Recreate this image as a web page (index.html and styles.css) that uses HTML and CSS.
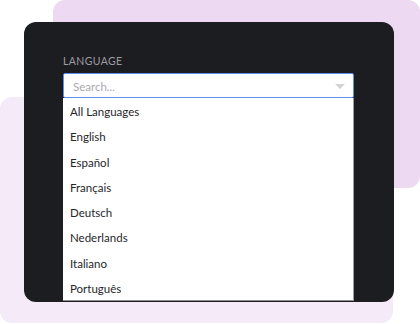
FILE: index.html
```html
<!DOCTYPE html>
<html>
<head>
<meta charset="utf-8">
<link rel="stylesheet" href="styles.css">
</head>
<body>
<div class="stage">
  <div class="blob blob-top"></div>
  <div class="blob blob-bottom"></div>
  <div class="card">
    <div class="label">LANGUAGE</div>
    <div class="select">
      <div class="search">
        <span class="placeholder">Search...</span>
        <span class="caret"></span>
      </div>
      <ul class="list">
        <li>All Languages</li>
        <li>English</li>
        <li>Español</li>
        <li>Français</li>
        <li>Deutsch</li>
        <li>Nederlands</li>
        <li>Italiano</li>
        <li>Português</li>
      </ul>
    </div>
  </div>
</div>
</body>
</html>
```

FILE: styles.css
```css
* { box-sizing: border-box; }
html, body { margin: 0; padding: 0; background: #ffffff; }
body { font-family: "Lato", "Inter", sans-serif; }

.stage {
  position: relative;
  width: 420px;
  height: 324px;
  overflow: hidden;
}

.blob {
  position: absolute;
  border-radius: 12px;
}
.blob-top {
  left: 53px;
  top: 0;
  width: 367px;
  height: 188px;
  background: #edd9f1;
}
.blob-bottom {
  left: 0;
  top: 97px;
  width: 393px;
  height: 226px;
  background: #f5eaf7;
}

.card {
  position: absolute;
  left: 24px;
  top: 22px;
  width: 370px;
  height: 280px;
  background: #1c1d21;
  border-radius: 12px;
  padding: 32px 40px 0 39px;
  overflow: hidden;
}

.label {
  font-size: 10.5px;
  letter-spacing: 0.4px;
  color: #9c9ca2;
  height: 14px;
  line-height: 14px;
  margin-bottom: 5px;
}

.select {
  width: 291px;
}

.search {
  height: 25px;
  background: #fff;
  border: 1px solid #5c8ff0;
  border-radius: 2px;
  display: flex;
  align-items: center;
  justify-content: space-between;
  padding: 1px 8px 0 9px;
}
.placeholder {
  font-size: 11.5px;
  color: #a9a9ad;
}
.caret {
  width: 0;
  height: 0;
  border-left: 5px solid transparent;
  border-right: 5px solid transparent;
  border-top: 5px solid #d3d3d6;
}

.list {
  list-style: none;
  margin: 0;
  padding: 0;
  background: #fff;
  border-right: 1px solid #9d9da2;
  border-bottom: 1px solid #8e8e92;
}
.list li {
  height: 25.25px;
  line-height: 23.25px;
  padding-top: 2px;
  padding-left: 7px;
  font-size: 11.5px;
  color: #26262a;
}
```
